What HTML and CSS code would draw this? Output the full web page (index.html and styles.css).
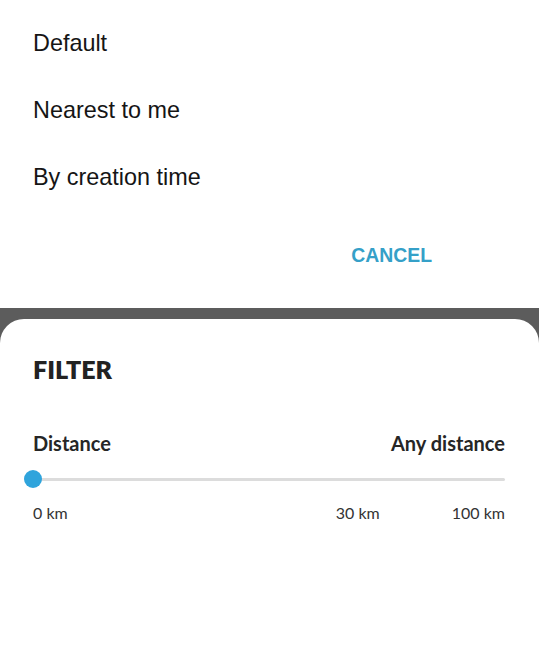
FILE: index.html
```html
<!DOCTYPE html>
<html lang="en">
<head>
    <meta charset="UTF-8">
    <meta name="viewport" content="width=device-width, initial-scale=1.0">
    <title>Sort and filter</title>
    <link rel="stylesheet" href="styles.css">
</head>
<body>
    <!-- Sort dialog -->
    <div class="sort-dialog">
        <ul class="sort-options">
            <li>Default</li>
            <li>Nearest to me</li>
            <li>By creation time</li>
        </ul>
        <div class="dialog-actions">
            <button class="text-btn">CANCEL</button>
        </div>
    </div>

    <!-- Filter sheet -->
    <div class="backdrop">
        <div class="sheet">
            <h2 class="sheet-title">FILTER</h2>
            <div class="filter-row">
                <span>Distance</span>
                <span>Any distance</span>
            </div>
            <div class="slider">
                <div class="slider-track"></div>
                <div class="slider-thumb"></div>
            </div>
            <div class="slider-labels">
                <span>0 km</span>
                <span>30 km</span>
                <span>100 km</span>
            </div>
        </div>
    </div>
</body>
</html>
```

FILE: styles.css
```css
html, body { margin: 0; padding: 0; height: 100%; }
body { background: #fff; display: flex; flex-direction: column; }

.sort-dialog { height: 308px; background: #fff; font-family: "Liberation Sans", Arial, sans-serif; }
.sort-options { list-style: none; margin: 0; padding: 10px 0 0 33px; }
.sort-options li { height: 67px; line-height: 67px; font-size: 23.4px; color: #151515; }
.dialog-actions { display: flex; justify-content: flex-end; padding: 32px 107px 0 0; }
.text-btn {
    background: none;
    border: none;
    padding: 0;
    font-family: "Liberation Sans", Arial, sans-serif;
    font-weight: bold;
    font-size: 19.4px;
    line-height: 24px;
    color: #35a0c8;
    cursor: pointer;
}

.backdrop { flex: 1; background: #5c5c5c; padding-top: 11px; display: flex; flex-direction: column; }
.sheet {
    flex: 1;
    background: #fff;
    border-radius: 24px 24px 0 0;
    padding: 0 34px 0 33px;
    font-family: Lato, "Open Sans", sans-serif;
    color: #262626;
}
.sheet-title { margin: 35px 0 0; font-size: 25px; line-height: 30px; font-weight: 800; color: #222; }

.filter-row { display: flex; justify-content: space-between; margin-top: 47px; font-size: 20px; line-height: 24px; font-weight: bold; }

.slider { position: relative; height: 20px; margin-top: 15px; }
.slider-track { position: absolute; left: 0; right: 0; top: 8px; height: 3px; background: #dcdcdc; border-radius: 2px; }
.slider-thumb {
    position: absolute;
    left: -9px;
    top: 0;
    width: 18px;
    height: 18px;
    border-radius: 50%;
    background: #2fa4dc;
}

.slider-labels {
    display: grid;
    grid-template-columns: 1fr auto auto;
    column-gap: 72px;
    margin-top: 13px;
    font-size: 16px;
    line-height: 20px;
    color: #333;
}
```
